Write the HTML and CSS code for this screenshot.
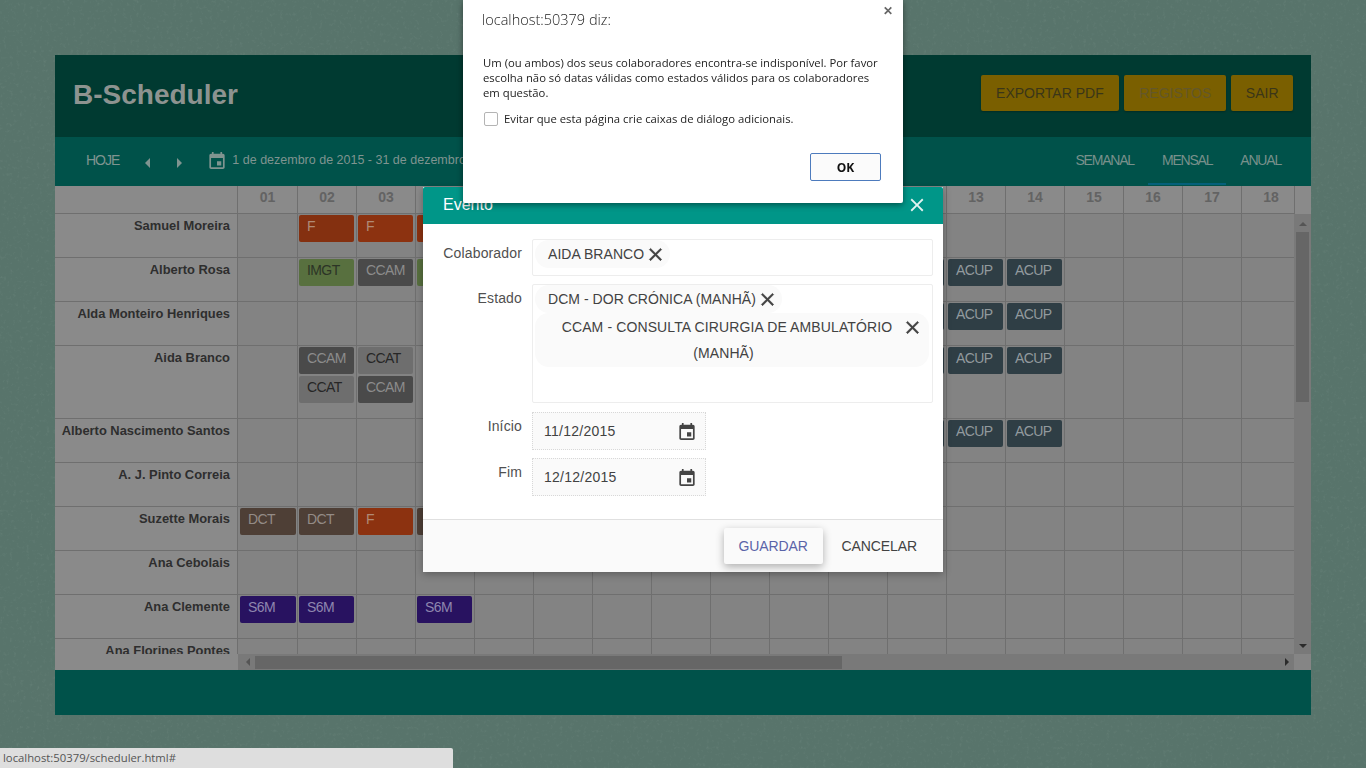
FILE: index.html
```html
<!DOCTYPE html>
<html lang="pt">
<head>
  <meta charset="UTF-8" />
  <title>B-Scheduler</title>
  <link rel="stylesheet" href="styles.css">
</head>
<body>

  <svg class="defs" width="0" height="0">
    <symbol id="ico-event" viewBox="3 1 18 20"><path d="M17 12h-5v5h5v-5zM16 1v2H8V1H6v2H5c-1.11 0-1.99.9-1.99 2L3 19c0 1.1.89 2 2 2h14c1.1 0 2-.9 2-2V5c0-1.1-.9-2-2-2h-1V1h-2zm3 18H5V8h14v11z"/></symbol>
    <symbol id="ico-close" viewBox="0 0 24 24"><path d="M19 6.41L17.59 5 12 10.59 6.41 5 5 6.41 10.59 12 5 17.59 6.41 19 12 13.41 17.59 19 19 17.59 13.41 12z"/></symbol>
    <filter id="grain"><feTurbulence type="fractalNoise" baseFrequency="0.3" numOctaves="4" seed="4"/><feColorMatrix values="0 0 0 0 0.8  0 0 0 0 0.9  0 0 0 0 0.85  0 0 0 1.6 -0.85"/></filter>
  </svg>
  <svg class="texture"><rect width="100%" height="100%" filter="url(#grain)"/></svg>

  <div class="app">
    <header class="app-header">
      <h1>B-Scheduler</h1>
      <div class="actions">
        <a class="btn">EXPORTAR PDF</a>
        <a class="btn disabled">REGISTOS</a>
        <a class="btn">SAIR</a>
      </div>
    </header>

    <nav class="toolbar">
      <a class="today">HOJE</a>
      <span class="caret left"></span>
      <span class="caret right"></span>
      <svg class="ico-cal"><use href="#ico-event"/></svg>
      <span class="range">1 de dezembro de 2015 - 31 de dezembro de 2015</span>
      <div class="views">
        <a>SEMANAL</a>
        <a class="active">MENSAL</a>
        <a>ANUAL</a>
      </div>
    </nav>

    <section class="grid">
      <div class="grid-head">
        <div class="head-scroll">
          <div class="row head">
            <div class="name"></div>
            <div class="cell">01</div><div class="cell">02</div><div class="cell">03</div><div class="cell">04</div><div class="cell">05</div><div class="cell">06</div><div class="cell">07</div><div class="cell">08</div><div class="cell">09</div><div class="cell">10</div><div class="cell">11</div><div class="cell">12</div><div class="cell">13</div><div class="cell">14</div><div class="cell">15</div><div class="cell">16</div><div class="cell">17</div><div class="cell">18</div>
          </div>
        </div>
        <div class="head-end"></div>
      </div>

      <div class="grid-main">
        <div class="rows">
          <div class="row">
            <div class="name">Samuel Moreira</div>
            <div class="cell"></div>
            <div class="cell"><span class="ev f dark">F</span></div>
            <div class="cell"><span class="ev f">F</span></div>
            <div class="cell"><span class="ev f">F</span></div>
            <div class="cell"></div><div class="cell"></div><div class="cell"></div><div class="cell"></div><div class="cell"></div><div class="cell"></div><div class="cell"></div><div class="cell"></div><div class="cell"></div><div class="cell"></div><div class="cell"></div><div class="cell"></div><div class="cell"></div><div class="cell"></div>
          </div>
          <div class="row">
            <div class="name">Alberto Rosa</div>
            <div class="cell"></div>
            <div class="cell"><span class="ev imgt">IMGT</span></div>
            <div class="cell"><span class="ev ccam">CCAM</span></div>
            <div class="cell"><span class="ev imgt">IMGT</span></div>
            <div class="cell"></div><div class="cell"></div><div class="cell"></div><div class="cell"></div><div class="cell"></div><div class="cell"></div><div class="cell"></div>
            <div class="cell"><span class="ev acup">ACUP</span></div>
            <div class="cell"><span class="ev acup">ACUP</span></div>
            <div class="cell"><span class="ev acup">ACUP</span></div>
            <div class="cell"></div><div class="cell"></div><div class="cell"></div><div class="cell"></div>
          </div>
          <div class="row">
            <div class="name">Alda Monteiro Henriques</div>
            <div class="cell"></div><div class="cell"></div><div class="cell"></div><div class="cell"></div><div class="cell"></div><div class="cell"></div><div class="cell"></div><div class="cell"></div><div class="cell"></div><div class="cell"></div><div class="cell"></div>
            <div class="cell"><span class="ev acup">ACUP</span></div>
            <div class="cell"><span class="ev acup">ACUP</span></div>
            <div class="cell"><span class="ev acup">ACUP</span></div>
            <div class="cell"></div><div class="cell"></div><div class="cell"></div><div class="cell"></div>
          </div>
          <div class="row">
            <div class="name">Aida Branco</div>
            <div class="cell"></div>
            <div class="cell"><span class="ev ccam">CCAM</span><span class="ev ccat">CCAT</span></div>
            <div class="cell"><span class="ev ccat">CCAT</span><span class="ev ccam">CCAM</span></div>
            <div class="cell"></div><div class="cell"></div><div class="cell"></div><div class="cell"></div><div class="cell"></div><div class="cell"></div><div class="cell"></div><div class="cell"></div>
            <div class="cell"><span class="ev acup">ACUP</span></div>
            <div class="cell"><span class="ev acup">ACUP</span></div>
            <div class="cell"><span class="ev acup">ACUP</span></div>
            <div class="cell"></div><div class="cell"></div><div class="cell"></div><div class="cell"></div>
          </div>
          <div class="row">
            <div class="name">Alberto Nascimento Santos</div>
            <div class="cell"></div><div class="cell"></div><div class="cell"></div><div class="cell"></div><div class="cell"></div><div class="cell"></div><div class="cell"></div><div class="cell"></div><div class="cell"></div><div class="cell"></div><div class="cell"></div>
            <div class="cell"><span class="ev acup">ACUP</span></div>
            <div class="cell"><span class="ev acup">ACUP</span></div>
            <div class="cell"><span class="ev acup">ACUP</span></div>
            <div class="cell"></div><div class="cell"></div><div class="cell"></div><div class="cell"></div>
          </div>
          <div class="row">
            <div class="name">A. J. Pinto Correia</div>
            <div class="cell"></div><div class="cell"></div><div class="cell"></div><div class="cell"></div><div class="cell"></div><div class="cell"></div><div class="cell"></div><div class="cell"></div><div class="cell"></div><div class="cell"></div><div class="cell"></div><div class="cell"></div><div class="cell"></div><div class="cell"></div><div class="cell"></div><div class="cell"></div><div class="cell"></div><div class="cell"></div>
          </div>
          <div class="row">
            <div class="name">Suzette Morais</div>
            <div class="cell"><span class="ev dct">DCT</span></div>
            <div class="cell"><span class="ev dct">DCT</span></div>
            <div class="cell"><span class="ev f">F</span></div>
            <div class="cell"><span class="ev dct">DCT</span></div>
            <div class="cell"></div><div class="cell"></div><div class="cell"></div><div class="cell"></div><div class="cell"></div><div class="cell"></div><div class="cell"></div><div class="cell"></div><div class="cell"></div><div class="cell"></div><div class="cell"></div><div class="cell"></div><div class="cell"></div><div class="cell"></div>
          </div>
          <div class="row">
            <div class="name">Ana Cebolais</div>
            <div class="cell"></div><div class="cell"></div><div class="cell"></div><div class="cell"></div><div class="cell"></div><div class="cell"></div><div class="cell"></div><div class="cell"></div><div class="cell"></div><div class="cell"></div><div class="cell"></div><div class="cell"></div><div class="cell"></div><div class="cell"></div><div class="cell"></div><div class="cell"></div><div class="cell"></div><div class="cell"></div>
          </div>
          <div class="row">
            <div class="name">Ana Clemente</div>
            <div class="cell"><span class="ev s6m">S6M</span></div>
            <div class="cell"><span class="ev s6m">S6M</span></div>
            <div class="cell"></div>
            <div class="cell"><span class="ev s6m">S6M</span></div>
            <div class="cell"></div><div class="cell"></div><div class="cell"></div><div class="cell"></div><div class="cell"></div><div class="cell"></div><div class="cell"></div><div class="cell"></div><div class="cell"></div><div class="cell"></div><div class="cell"></div><div class="cell"></div><div class="cell"></div><div class="cell"></div>
          </div>
          <div class="row">
            <div class="name">Ana Florines Pontes</div>
            <div class="cell"></div><div class="cell"></div><div class="cell"></div><div class="cell"></div><div class="cell"></div><div class="cell"></div><div class="cell"></div><div class="cell"></div><div class="cell"></div><div class="cell"></div><div class="cell"></div><div class="cell"></div><div class="cell"></div><div class="cell"></div><div class="cell"></div><div class="cell"></div><div class="cell"></div><div class="cell"></div>
          </div>
        </div>
        <div class="vscroll">
          <span class="arrow up"></span>
          <span class="thumb"></span>
          <span class="arrow down"></span>
        </div>
      </div>

      <div class="hbar">
        <div class="hbar-blank"></div>
        <div class="hscroll">
          <span class="arrow back"></span>
          <span class="thumb"></span>
          <span class="arrow fwd"></span>
        </div>
        <div class="corner"></div>
      </div>
    </section>

    <footer class="app-footer"></footer>
  </div>

  <!-- event dialog -->
  <div class="modal">
    <div class="modal-head">
      <h2>Evento</h2>
      <svg class="ico-x white"><use href="#ico-close"/></svg>
    </div>
    <form class="modal-body">
      <div class="field">
        <label>Colaborador</label>
        <div class="chips short">
          <span class="chip"><span class="chip-text">AIDA BRANCO</span><svg class="ico-x"><use href="#ico-close"/></svg></span>
        </div>
      </div>
      <div class="field">
        <label>Estado</label>
        <div class="chips tall">
          <span class="chip"><span class="chip-text">DCM - DOR CRÓNICA (MANHÃ)</span><svg class="ico-x"><use href="#ico-close"/></svg></span>
          <span class="chip wide"><span class="chip-text">CCAM - CONSULTA CIRURGIA DE AMBULATÓRIO (MANHÃ)</span><svg class="ico-x"><use href="#ico-close"/></svg></span>
        </div>
      </div>
      <div class="field date-first">
        <label>Início</label>
        <div class="date"><span>11/12/2015</span><svg class="ico-cal"><use href="#ico-event"/></svg></div>
      </div>
      <div class="field">
        <label>Fim</label>
        <div class="date"><span>12/12/2015</span><svg class="ico-cal"><use href="#ico-event"/></svg></div>
      </div>
    </form>
    <div class="modal-foot">
      <a class="flat raised">GUARDAR</a>
      <a class="flat">CANCELAR</a>
    </div>
  </div>

  <!-- browser alert -->
  <div class="alert">
    <div class="alert-title">localhost:50379 diz:</div>
    <span class="alert-close">&#10005;</span>
    <p>Um (ou ambos) dos seus colaboradores encontra-se indisponível. Por favor escolha não só datas válidas como estados válidos para os colaboradores em questão.</p>
    <div class="alert-check"><span class="box"></span>Evitar que esta página crie caixas de diálogo adicionais.</div>
    <div class="alert-foot"><button type="button">OK</button></div>
  </div>

  <div class="statusbar">localhost:50379/scheduler.html#</div>

</body>
</html>
```

FILE: styles.css
```css
* {
  box-sizing: border-box;
}
html,
body {
  height: 100%;
  margin: 0;
}
body {
  font-family: "Liberation Sans", Arial, sans-serif;
  font-size: 14px;
  background-color: #58746b;
  padding: 55px;
  overflow: hidden;
}
.defs {
  position: absolute;
}
.texture {
  position: fixed;
  left: 0;
  top: 0;
  width: 1366px;
  height: 768px;
  opacity: 0.1;
}

.app {
  position: relative;
  width: 1256px;
  height: 660px;
  display: flex;
  flex-direction: column;
}

/* top header */
.app-header {
  height: 82px;
  background: #003a31;
  padding: 20px 18px 0;
  display: flex;
  justify-content: space-between;
  align-items: flex-start;
}
.app-header h1 {
  margin: 1px 0 0;
  font-size: 28px;
  line-height: 38px;
  color: #8d9390;
}
.actions {
  display: flex;
  gap: 5px;
}
.btn {
  height: 36px;
  line-height: 36px;
  padding: 0 15px;
  background: #7a5f00;
  color: #3a3618;
  border-radius: 2px;
  box-shadow: 0 1px 2px rgba(0, 0, 0, 0.25);
}
.btn:first-child {
  padding: 0 15.5px;
}
.btn:last-child {
  padding: 0 14.5px;
}
.btn.disabled {
  color: #63572a;
}

/* toolbar */
.toolbar {
  height: 49px;
  background: #00524a;
  color: #7f9490;
  display: flex;
  align-items: center;
  padding: 0 0 3px 31px;
}
.today {
  letter-spacing: -1px;
}
.caret {
  width: 0;
  height: 0;
  border-top: 5px solid transparent;
  border-bottom: 5px solid transparent;
  margin-top: 5px;
}
.caret.left {
  border-right: 5px solid #7f9490;
  margin-left: 26px;
}
.caret.right {
  border-left: 5px solid #7f9490;
  margin-left: 27px;
}
.ico-cal {
  width: 16px;
  height: 17px;
  fill: #444;
  flex: none;
}
.toolbar .ico-cal {
  fill: #7f9490;
  margin-left: 27px;
}
.range {
  margin-left: 7px;
  white-space: nowrap;
  font-size: 12.5px;
}
.views {
  margin: 0 0 -3px auto;
  display: flex;
  align-self: stretch;
}
.views a {
  position: relative;
  line-height: 47px;
  padding: 0 14px;
  letter-spacing: -1.2px;
  color: #78908b;
}
.views a:last-child {
  padding-right: 30px;
}
.views a.active::after {
  content: "";
  position: absolute;
  left: 0;
  right: 0;
  bottom: 1px;
  height: 2px;
  background: #04607a;
}

/* schedule grid */
.grid {
  flex: 1;
  display: flex;
  flex-direction: column;
  background: #838383;
  overflow: hidden;
}
.grid-head {
  display: flex;
  flex: none;
}
.head-scroll {
  width: 1240px;
  overflow: hidden;
  border-right: 1px solid #6f6f6f;
}
.head-end {
  flex: 1;
  background: #8a8a8a;
}
.row {
  display: flex;
  border-bottom: 1px solid #6f6f6f;
  width: max-content;
}
.name {
  width: 183px;
  flex: none;
  padding: 4px 7px 0 0;
  background: #8a8a8a;
  border-right: 1px solid #6f6f6f;
  text-align: right;
  font-size: 12.9px;
  font-weight: bold;
  color: #2e2e2e;
  line-height: 15px;
  white-space: nowrap;
}
.cell {
  width: 59px;
  min-height: 43px;
  flex: none;
  padding: 1px 2px 13px 1px;
  border-right: 1px solid #6f6f6f;
}
.name + .cell {
  width: 60px;
  padding-left: 2px;
  padding-right: 1px;
}
.head {
  height: 28px;
  background: #8a8a8a;
}
.head .cell {
  min-height: 0;
  padding: 3px 0 0;
  text-align: center;
  font-weight: bold;
  color: #636363;
}
.grid-main {
  height: 440px;
  flex: none;
  display: flex;
}
.rows {
  width: 1239px;
  overflow: hidden;
}
.ev {
  display: block;
  height: 27px;
  margin-bottom: 2px;
  padding: 2px 0 0 8px;
  border-radius: 2px;
  line-height: 18px;
  letter-spacing: -0.6px;
}
.f {
  background: #8c3210;
  color: #b08a76;
}
.f.dark {
  background: #843010;
}
.imgt {
  background: #58703f;
  color: #2c3426;
}
.ccam {
  background: #4a4a4a;
  color: #8c8c8c;
}
.ccat {
  background: #6e6e6e;
  color: #262626;
}
.acup {
  background: #2f3e45;
  color: #929a9e;
}
.dct {
  background: #4e3f36;
  color: #948b86;
}
.s6m {
  background: #281260;
  color: #8e86ae;
}

/* fake browser scrollbars */
.vscroll {
  width: 17px;
  background: #797979;
  display: flex;
  flex-direction: column;
  align-items: center;
  justify-content: space-between;
  padding: 8px 0 6px;
}
.vscroll .thumb {
  width: 13px;
  height: 170px;
  margin-bottom: 236px;
  background: #666;
}
.arrow {
  width: 0;
  height: 0;
  flex: none;
}
.arrow.up {
  border: 4px solid transparent;
  border-top: 0;
  border-bottom: 4px solid #555;
}
.arrow.down {
  border: 4px solid transparent;
  border-bottom: 0;
  border-top: 4px solid #2b2b2b;
}
.arrow.back {
  border: 4px solid transparent;
  border-left: 0;
  border-right: 4px solid #555;
}
.arrow.fwd {
  border: 4px solid transparent;
  border-right: 0;
  border-left: 4px solid #2b2b2b;
  margin-left: auto;
}
.hbar {
  height: 16px;
  display: flex;
  flex: none;
}
.hbar-blank {
  width: 183px;
  background: #8a8a8a;
}
.hscroll {
  width: 1056px;
  background: #797979;
  display: flex;
  align-items: center;
  padding: 0 5px 0 8px;
}
.hscroll .thumb {
  width: 587px;
  height: 13px;
  margin-left: 5px;
  background: #666;
}
.corner {
  flex: 1;
  background: #858585;
}
.app-footer {
  height: 45px;
  background: #00524a;
  flex: none;
}

/* event dialog */
.modal {
  position: absolute;
  left: 423px;
  top: 187px;
  width: 520px;
  height: 385px;
  background: #fff;
  color: #424242;
  display: flex;
  flex-direction: column;
  box-shadow: 0 2px 8px rgba(0, 0, 0, 0.3);
}
.modal-head {
  height: 37px;
  flex: none;
  background: #009688;
  color: #fff;
  display: flex;
  justify-content: space-between;
  align-items: center;
  padding: 0 15px 0 20px;
  border-radius: 2px 2px 0 0;
}
.modal-head h2 {
  margin: 0 0 2px;
  font-size: 16px;
  font-weight: normal;
}
.ico-x {
  width: 21px;
  height: 21px;
  fill: #424242;
  stroke: #424242;
  stroke-width: 0.7;
  flex: none;
}
.ico-x.white {
  fill: #e4f3f1;
  stroke: none;
  width: 22px;
  height: 22px;
  margin-top: -2px;
}
.modal-body {
  flex: 1;
  padding: 15px 10px 0 0;
  display: flex;
  flex-direction: column;
  gap: 8px;
}
.field {
  display: flex;
  gap: 10px;
}
.date-first {
  margin-top: 1px;
}
.field label {
  width: 99px;
  flex: none;
  padding-top: 6px;
  text-align: right;
  color: #505050;
  line-height: 16px;
  letter-spacing: 0.15px;
}
.chips {
  flex: 1;
  border: 1px solid #ededed;
  border-radius: 2px;
  padding: 0 3px 0 2px;
  display: flex;
  flex-direction: column;
  align-items: flex-start;
}
.chips.short {
  height: 37px;
}
.chips.tall {
  height: 119px;
}
.chip {
  display: inline-flex;
  align-items: center;
  background: #fafafa;
  border-radius: 14px;
  padding: 1px 4px 1px 13px;
  line-height: 26px;
  white-space: nowrap;
  letter-spacing: 0.04px;
}
.chip .ico-x {
  margin-left: 1px;
}
.chip.wide {
  width: 100%;
  align-items: flex-start;
  padding-right: 6px;
  white-space: normal;
  letter-spacing: 0.12px;
}
.chip.wide .ico-x {
  margin-top: 3px;
}
.chip.wide .chip-text {
  flex: 1;
  text-align: center;
  padding-right: 2px;
  text-indent: 7px;
}
.date {
  width: 174px;
  height: 38px;
  padding: 0 10px 0 11px;
  background: #fafafa;
  border: 1px dotted #d8d8d8;
  display: flex;
  align-items: center;
  justify-content: space-between;
  letter-spacing: 0.25px;
}
.modal-foot {
  height: 53px;
  flex: none;
  background: #fafafa;
  border-top: 1px solid #e0e0e0;
  display: flex;
  align-items: flex-start;
  padding: 8px 11px 0 0;
  justify-content: flex-end;
  gap: 4px;
  letter-spacing: -0.1px;
}
.flat {
  height: 36px;
  line-height: 36px;
  padding: 0 15px;
  border-radius: 2px;
  color: #424242;
}
.flat.raised {
  width: 99px;
  padding: 0;
  text-align: center;
  background: #fafafa;
  color: #5a64a8;
  box-shadow: 0 3px 8px rgba(0, 0, 0, 0.3);
}

/* browser alert */
.alert {
  position: absolute;
  left: 463px;
  top: 0;
  width: 440px;
  height: 203px;
  background: #fff;
  border-radius: 0 0 2px 2px;
  box-shadow: 0 2px 6px rgba(0, 0, 0, 0.45);
  padding: 10px 20px 0 20px;
  font-family: "Open Sans", "Noto Sans", sans-serif;
  font-size: 11.3px;
  line-height: 15px;
  color: #222;
}
.alert-title {
  font-size: 14.5px;
  font-weight: 300;
  line-height: 20px;
  color: #222;
  margin-left: -1px;
}
.alert-close {
  position: absolute;
  right: 10px;
  top: 3px;
  font-size: 12px;
  color: #666;
  font-weight: bold;
}
.alert p {
  margin: 25px 0 0;
}
.alert-check {
  display: flex;
  align-items: center;
  margin-top: 11px;
}
.box {
  width: 14px;
  height: 14px;
  margin: 0 6px 0 1px;
  border: 1px solid #b4b4b4;
  border-radius: 2px;
}
.alert-foot {
  display: flex;
  justify-content: flex-end;
  margin: 27px 2px 0 0;
}
.alert-foot button {
  width: 71px;
  height: 28px;
  background: #fbfbfb;
  border: 1px solid #4d7bbd;
  border-radius: 2px;
  font-family: inherit;
  font-size: 12px;
  font-weight: bold;
  color: #111;
}

.statusbar {
  position: fixed;
  left: 0;
  bottom: 0;
  width: 453px;
  height: 20px;
  padding-left: 3px;
  background: #dedede;
  border-radius: 0 2px 0 0;
  font-family: "Open Sans", "Noto Sans", sans-serif;
  font-size: 11.3px;
  line-height: 20px;
  color: #555;
}
```
